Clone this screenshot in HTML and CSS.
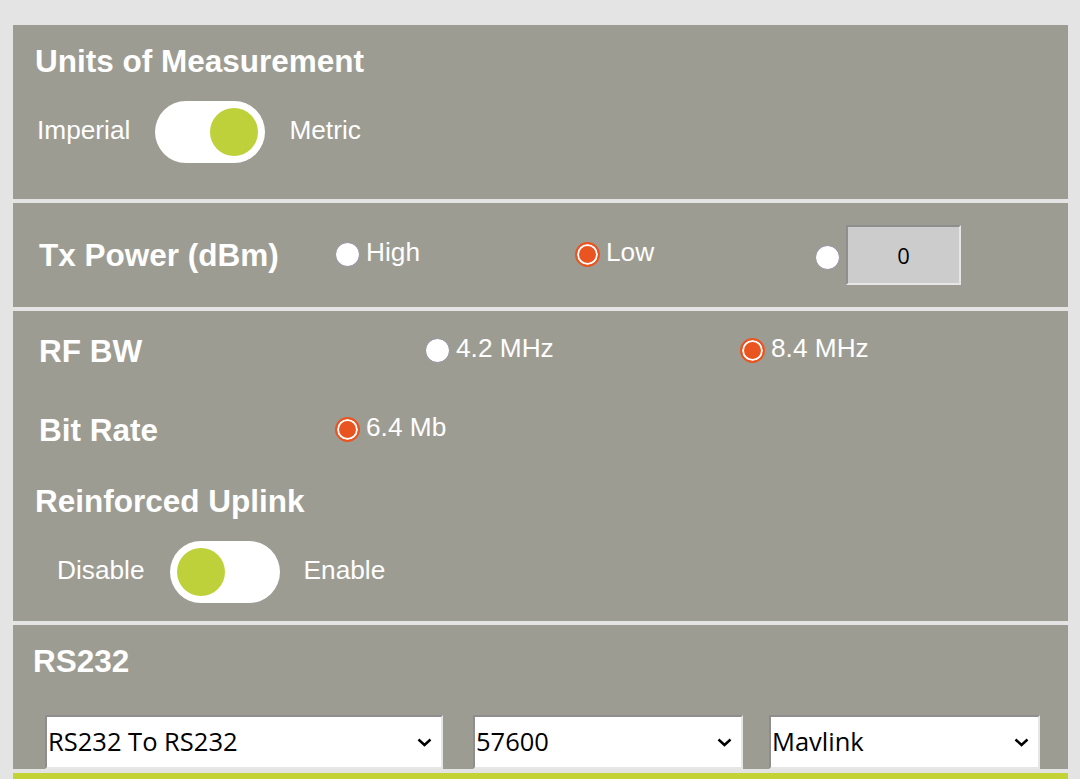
FILE: index.html
```html
<!DOCTYPE html>
<html lang="en">
<head>
<meta charset="utf-8">
<title>Settings</title>
<link rel="stylesheet" href="styles.css">
</head>
<body>
<div class="page">
  <section class="panel units">
    <h2 class="title">Units of Measurement</h2>
    <div class="switch-row units-switch">
      <span class="switch-label">Imperial</span>
      <span class="switch on"><span class="knob"></span></span>
      <span class="switch-label right">Metric</span>
    </div>
  </section>

  <section class="panel tx">
    <h2 class="row-label">Tx Power (dBm)</h2>
    <label class="opt"><input type="radio" name="tx" class="radio"><span class="opt-text">High</span></label>
    <label class="opt"><input type="radio" name="tx" class="radio" checked><span class="opt-text">Low</span></label>
    <label class="opt custom"><input type="radio" name="tx" class="radio"><input type="text" class="num" value="0"></label>
  </section>

  <section class="panel radio-panel">
    <div class="bw-row">
      <h2 class="row-label">RF BW</h2>
      <label class="opt"><input type="radio" name="bw" class="radio"><span class="opt-text">4.2 MHz</span></label>
      <label class="opt"><input type="radio" name="bw" class="radio" checked><span class="opt-text">8.4 MHz</span></label>
    </div>
    <div class="rate-row">
      <h2 class="row-label">Bit Rate</h2>
      <label class="opt"><input type="radio" name="rate" class="radio" checked><span class="opt-text">6.4 Mb</span></label>
    </div>
    <h2 class="title uplink-title">Reinforced Uplink</h2>
    <div class="switch-row uplink-switch">
      <span class="switch-label">Disable</span>
      <span class="switch off"><span class="knob"></span></span>
      <span class="switch-label right">Enable</span>
    </div>
  </section>

  <section class="panel rs">
    <h2 class="title rs-title">RS232</h2>
    <div class="selects">
      <div class="sel sel-mode">
        <select><option>RS232 To RS232</option></select>
        <svg class="chev" width="15" height="9" viewBox="0 0 15 9"><path d="M1.5 1.5 L7.5 7 L13.5 1.5" fill="none" stroke="#000" stroke-width="2.4"/></svg>
      </div>
      <div class="sel sel-baud">
        <select><option>57600</option></select>
        <svg class="chev" width="15" height="9" viewBox="0 0 15 9"><path d="M1.5 1.5 L7.5 7 L13.5 1.5" fill="none" stroke="#000" stroke-width="2.4"/></svg>
      </div>
      <div class="sel sel-proto">
        <select><option>Mavlink</option></select>
        <svg class="chev" width="15" height="9" viewBox="0 0 15 9"><path d="M1.5 1.5 L7.5 7 L13.5 1.5" fill="none" stroke="#000" stroke-width="2.4"/></svg>
      </div>
    </div>
  </section>

  <div class="green-bar"></div>
</div>
</body>
</html>
```

FILE: styles.css
```css
* { box-sizing: border-box; }

html, body {
  margin: 0;
  padding: 0;
  background: #e4e4e4;
  overflow: hidden;
}

body {
  font-family: "Liberation Sans", Arial, sans-serif;
  color: #fff;
}

.page {
  padding: 25px 12px 0 13px;
}

.panel {
  background: #9d9c93;
  margin-bottom: 4px;
}

.title {
  margin: 0;
  font-size: 31.5px;
  line-height: 36px;
  font-weight: bold;
  color: #fff;
}

.row-label {
  margin: 0;
  font-size: 31.5px;
  line-height: 36px;
  font-weight: bold;
  color: #fff;
}

/* Units panel */
.units {
  height: 174px;
  padding: 18px 0 0 22px;
}

.switch-row {
  display: flex;
  align-items: center;
  margin-top: 22px;
  height: 62px;
}

.units-switch { margin-left: 2px; }

.switch-label {
  font-size: 26.25px;
  margin-right: 25px;
  margin-bottom: 4px;
}

.switch-label.right {
  margin-right: 0;
  margin-left: 24px;
}

.switch {
  display: flex;
  align-items: center;
  width: 110px;
  height: 62px;
  border-radius: 31px;
  background: #fff;
  padding: 0 7px;
}

.switch.on { justify-content: flex-end; }
.switch.off { justify-content: flex-start; }

.knob {
  width: 48px;
  height: 48px;
  border-radius: 50%;
  background: #bfd13a;
}

/* Tx panel */
.tx {
  height: 104px;
  display: grid;
  grid-template-columns: 296px 240px 240px auto;
  align-items: center;
  padding-left: 26px;
}

.opt {
  display: flex;
  align-items: center;
  margin-bottom: 5px;
}

.radio {
  appearance: none;
  -webkit-appearance: none;
  margin: 4px 6px 0 0;
  width: 25px;
  height: 25px;
  border-radius: 50%;
  background: #fff;
  border: 1px solid #8f8ea0;
  flex: none;
}

.radio:checked {
  background: #e95420;
  border: 2px solid #e95420;
  box-shadow: inset 0 0 0 2px #fff;
}

.opt-text {
  font-size: 26.25px;
  color: #fff;
}

.custom { margin-bottom: 0; }
.custom .radio { margin-right: 6px; }

.num {
  width: 115px;
  height: 60px;
  margin: 0;
  padding: 0;
  background: #cccccc;
  border: 2px solid;
  border-color: #8e8e8e #e6e6e6 #e6e6e6 #8e8e8e;
  font-family: "Open Sans", "DejaVu Sans", sans-serif;
  font-size: 22px;
  color: #000;
  text-align: center;
  outline: none;
}

/* RF BW / Bit rate / uplink */
.radio-panel {
  height: 310px;
  padding-left: 26px;
}

.bw-row {
  display: grid;
  grid-template-columns: 386px 315px auto;
  align-items: center;
  height: 80px;
}

.rate-row {
  display: grid;
  grid-template-columns: 296px auto;
  align-items: center;
  height: 78px;
}

.uplink-title {
  margin-top: 14px;
  margin-left: -4px;
}

.uplink-switch {
  margin-left: 18px;
}

/* RS232 */
.rs {
  height: 144px;
  padding: 18px 0 0 20px;
}

.rs-title { margin-left: 0; }

.selects {
  display: flex;
  margin-top: 36px;
  margin-left: 12px;
}

.sel {
  position: relative;
  height: 54px;
}

.sel-mode { width: 398px; margin-right: 30px; }
.sel-baud { width: 270px; margin-right: 26px; }
.sel-proto { width: 271px; }

.sel select {
  appearance: none;
  -webkit-appearance: none;
  width: 100%;
  height: 54px;
  margin: 0;
  padding: 0 30px 2px 1px;
  background: #fff;
  border: 2px solid;
  border-color: #8e8e8e #e6e6e6 #e6e6e6 #8e8e8e;
  border-radius: 0;
  font-family: "Open Sans", "DejaVu Sans", sans-serif;
  font-size: 25.5px;
  color: #000;
  outline: none;
}

.chev {
  position: absolute;
  right: 11px;
  top: 23px;
  pointer-events: none;
}

.green-bar {
  height: 20px;
  background: #c3d335;
}
```
